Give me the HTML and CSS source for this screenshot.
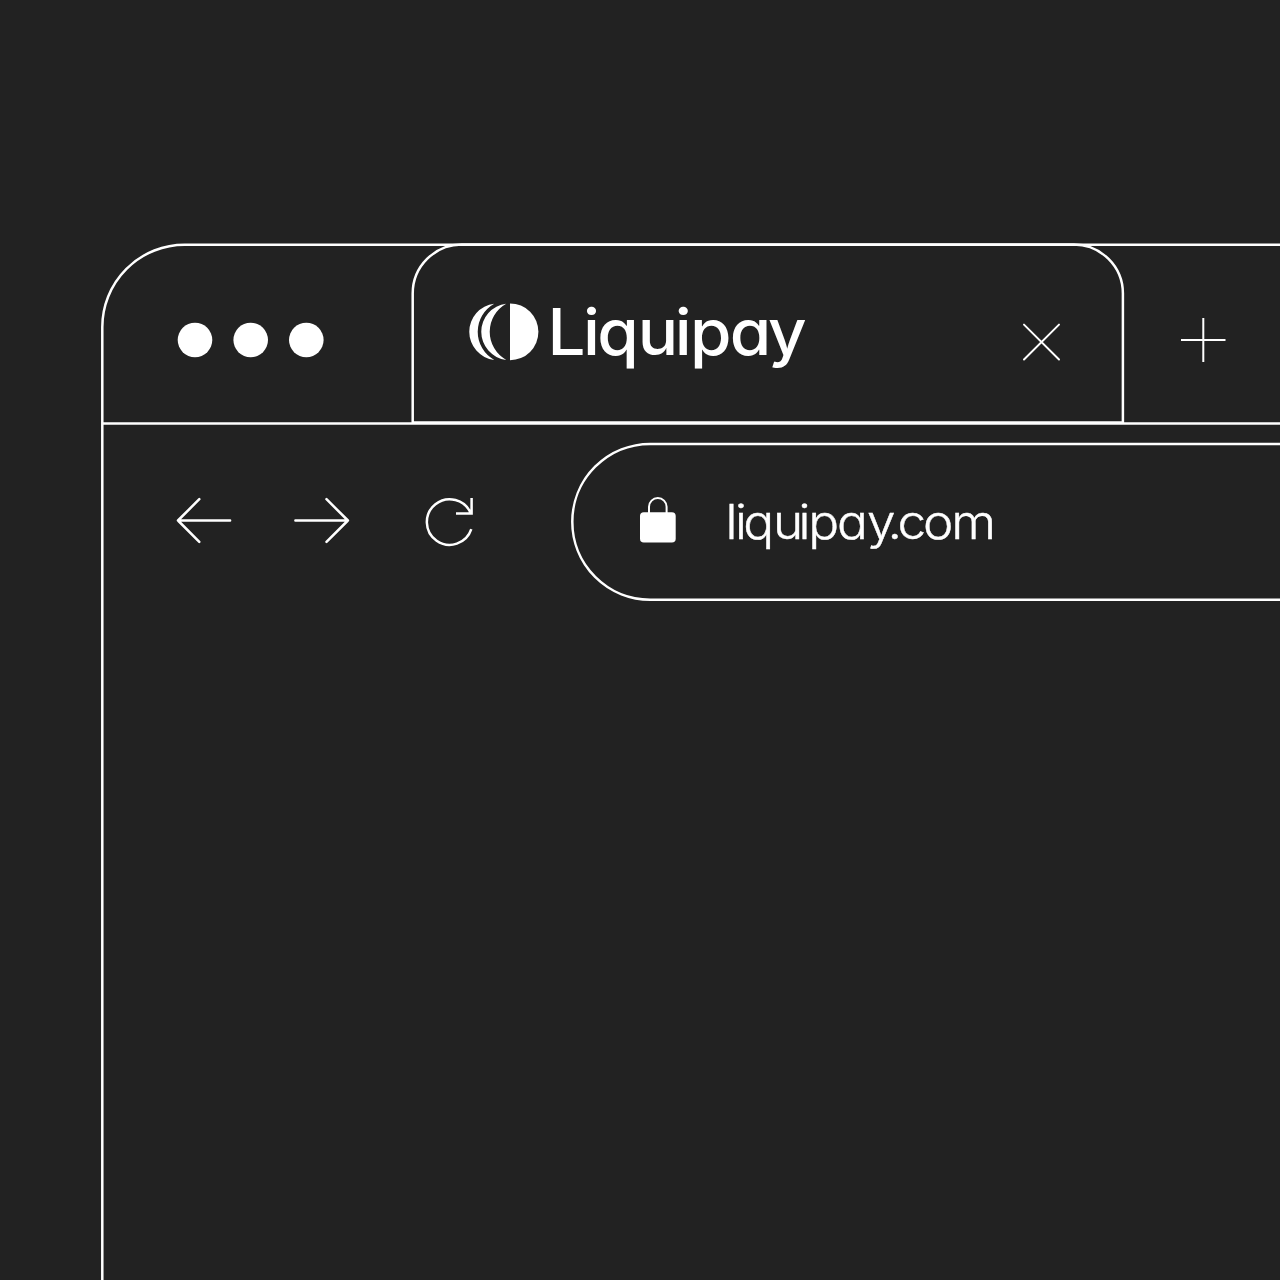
FILE: index.html
```html
<!DOCTYPE html>
<html lang="en">
<head>
<meta charset="utf-8">
<title>Liquipay</title>
<link rel="stylesheet" href="styles.css">
</head>
<body>
<main class="stage">
  <svg class="outline" viewBox="0 0 1280 1280" aria-hidden="true">
    <path d="M102.3 1290V327A82.4 82.4 0 0 1 184.700 244.700H1290"/>
    <path d="M102.300 423.400H1290"/>
    <path d="M412.700 422.400V293.600A49 49 0 0 1 461.700 244.600H1073.900A49 49 0 0 1 1122.900 293.600V422.400Z"/>
    <path d="M1290 443.900H650.200A77.900 77.900 0 0 0 650.200 599.700H1290"/>
  </svg>
  <div class="window">
    <header class="tabs">
      <svg class="dots" viewBox="0 0 148 36"><circle cx="19" cy="18" r="17.300"/><circle cx="74.700" cy="18" r="17.300"/><circle cx="130.300" cy="18" r="17.300"/></svg>
      <div class="tab">
        <svg class="mark" viewBox="469 303 70 58">
          <path d="M494.200 303.700A28.300 28.300 0 0 0 494.200 359.900A32.200 32.200 0 0 1 494.200 303.700Z"/>
          <path d="M506.200 303.700A28.300 28.300 0 0 0 506.200 359.900A32.200 32.200 0 0 1 506.200 303.700Z"/>
          <path d="M510 303.400A28.400 28.400 0 0 1 510 360.200Z"/>
        </svg>
        <svg class="brand" viewBox="547 290 270 90"><text transform="translate(547 355.200) scale(1.05 1)" x="0.600 34.200 47.900 86.400 121.600 136.300 174 210.400">Liquipay</text></svg>
        <svg class="close" viewBox="1022 323 39 38"><path d="M1024 324.600L1059 359.500M1059 324.600L1024 359.500"/></svg>
      </div>
      <svg class="plus" viewBox="1180 317 47 46"><path d="M1181 340H1225.500M1203.300 318V362"/></svg>
    </header>
    <nav class="toolbar">
      <svg class="arrow" viewBox="175 496 58 50"><path d="M230.100 520.500H178M199.300 499.200L178 520.500L199.300 541.800"/></svg>
      <svg class="arrow forward" viewBox="293 496 58 50"><path d="M295.400 520.500H347.900M326.500 499.200L347.900 520.500L326.500 541.800"/></svg>
      <svg class="reload" viewBox="424 496 51 51"><path d="M471.300 529.200A22.800 22.800 0 1 1 470.800 513.500M471.600 498V513.600H456"/></svg>
      <div class="address">
        <svg class="lock" viewBox="638 496 40 48"><rect x="640" y="512.200" width="35.700" height="30.400" rx="3.800"/><path d="M649 513V506.800A8.800 8.800 0 0 1 666.600 506.800V513"/></svg>
        <svg class="url" viewBox="724 490 280 70"><text transform="translate(725 539.300) scale(1.08 1)" x="0.5 9.300 17 44.400 68 77.200 103.800 131.600 150.400 159.800 183.400 209.600">liquipay.com</text></svg>
      </div>
    </nav>
  </div>
</main>
</body>
</html>
```
FILE: styles.css
```css
body {
  margin: 0;
  background: #222;
  color: #fff;
  font-family: Inter, "Liberation Sans", sans-serif;
  font-feature-settings: "cv11" 1;
}

svg {
  display: block;
  flex: none;
  fill: none;
  stroke: #fff;
}

.stage {
  display: grid;
  width: 1280px;
  height: 1280px;
  overflow: hidden;
}

.outline,
.window {
  grid-area: 1 / 1;
}

.outline {
  width: 1280px;
  height: 1280px;
  stroke-width: 2.5;
}

.window {
  padding: 244px 0 0 102px;
}

.tabs {
  display: flex;
  height: 179px;
  padding-left: 74px;
}

.dots {
  width: 148px;
  height: 36px;
  margin-top: 78px;
  fill: #fff;
  stroke: none;
}

.tab {
  display: flex;
  width: 654px;
  margin-left: 88px;
  padding-left: 57px;
}

.mark {
  width: 70px;
  height: 58px;
  margin-top: 59px;
  fill: #fff;
  stroke: none;
}

.brand {
  width: 270px;
  height: 90px;
  margin: 46px 0 0 8px;
  fill: #fff;
  stroke: none;
  font-size: 64px;
  font-weight: 540;
}

.close {
  width: 39px;
  height: 38px;
  margin: 79px 0 0 205px;
  stroke-width: 2;
  stroke-linecap: round;
}

.plus {
  width: 47px;
  height: 46px;
  margin: 73px 0 0 57px;
  stroke-width: 2;
}

.toolbar {
  display: flex;
  height: 156px;
  padding: 21px 0 0 73px;
}

.arrow {
  width: 58px;
  height: 50px;
  margin-top: 52px;
  stroke-width: 2.5;
  stroke-linecap: round;
  stroke-linejoin: round;
}

.forward {
  margin-left: 60px;
}

.reload {
  width: 51px;
  height: 51px;
  margin: 52px 0 0 73px;
  stroke-width: 2.5;
}

.address {
  display: flex;
  margin-left: 97px;
  padding-left: 66px;
}

.lock {
  width: 40px;
  height: 48px;
  margin-top: 52px;
  stroke-width: 2;
}

.lock rect {
  fill: #fff;
  stroke: none;
}

.url {
  width: 280px;
  height: 70px;
  margin: 46px 0 0 46px;
  fill: #fff;
  stroke-width: 0.4;
  font-size: 47.500px;
  font-weight: 300;
}
```
